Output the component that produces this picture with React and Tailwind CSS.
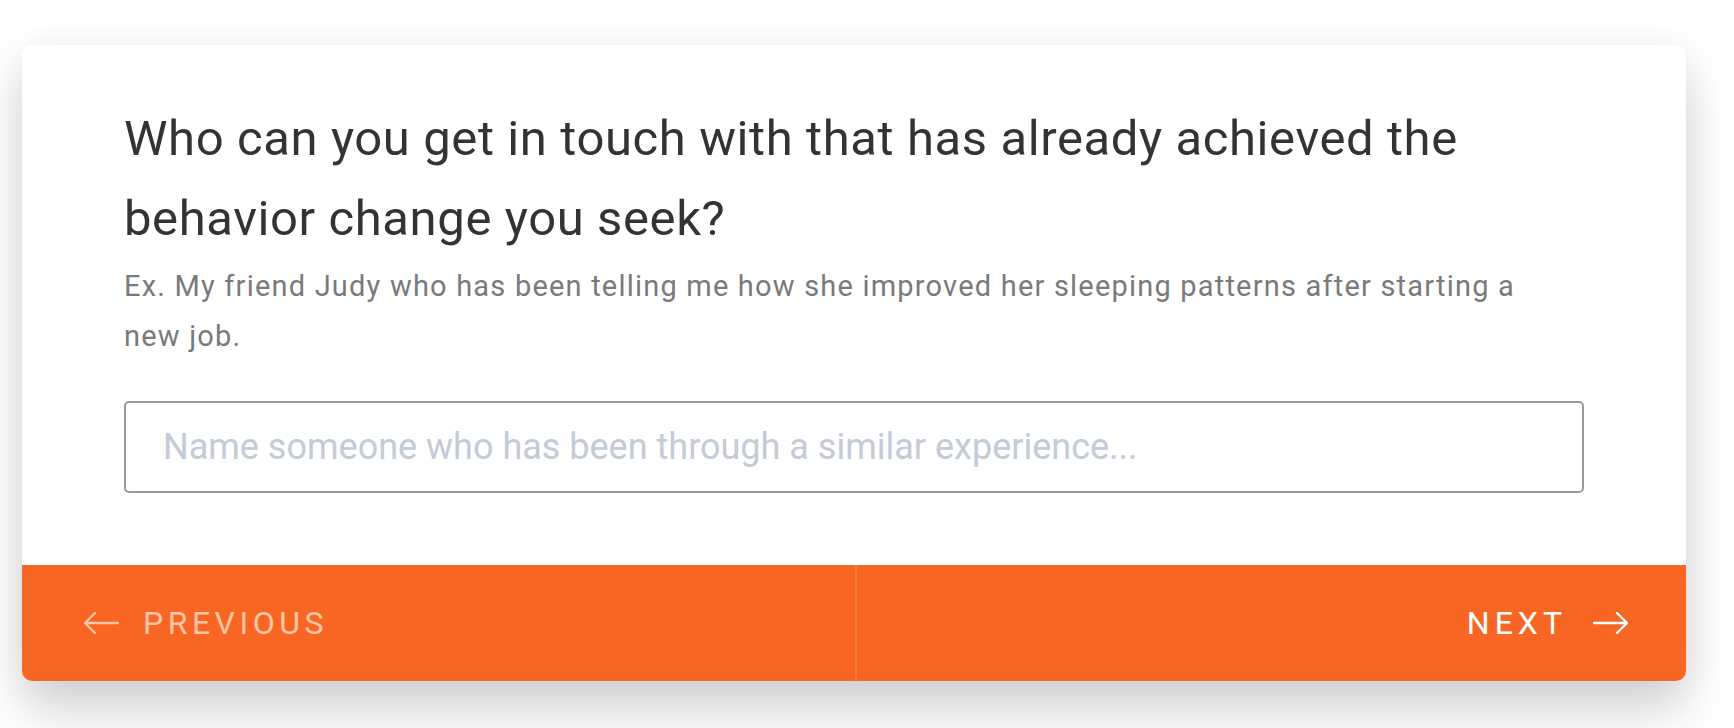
import React from "react";

function Arrow({ dir = "right", className = "" }) {
  const d =
    dir === "right"
      ? "M1 11 H34 M24 1 L34 11 L24 21"
      : "M34 11 H1 M11 1 L1 11 L11 21";
  return (
    <svg width="35" height="22" viewBox="0 0 35 22" fill="none" className={className}>
      <path d={d} stroke="currentColor" strokeWidth="2.4" strokeLinecap="round" strokeLinejoin="round" />
    </svg>
  );
}

export default function App() {
  return (
    <div className="min-h-screen bg-white pt-[45px] pl-[22px] font-['Roboto',sans-serif]">
      <div className="w-[1664px] rounded-[10px] bg-white shadow-[0_30px_50px_rgba(0,0,0,0.17),0_0_40px_rgba(0,0,0,0.05)] overflow-hidden">
        <div className="px-[102px] pt-[54px] pb-[72px]">
          <h2 className="text-[49px] leading-[80px] tracking-[0.6px] text-[#333333] font-normal">
            Who can you get in touch with that has already achieved the behavior change you seek?
          </h2>
          <p className="mt-[2px] max-w-[1430px] text-[29px] leading-[50px] tracking-[1.2px] text-[#7a7a7a]">
            Ex. My friend Judy who has been telling me how she improved her sleeping patterns after starting a new job.
          </p>
          <input
            type="text"
            placeholder="Name someone who has been through a similar experience..."
            className="mt-[40px] block w-full h-[92px] rounded-[5px] border-2 border-[#999999] px-[37px] text-[36px] text-[#333] placeholder:text-[#c3cbd6] outline-none"
          />
        </div>
        <div className="flex h-[116px] bg-[#f86624]">
          <button className="flex-1 flex items-center pl-[62px] text-[#fdc6a6]">
            <Arrow dir="left" />
            <span className="ml-[24px] text-[32px] tracking-[4.5px] uppercase">Previous</span>
          </button>
          <div className="w-[2px] bg-[#fb7a3e]" />
          <button className="flex-1 flex items-center justify-end pr-[58px] text-white">
            <span className="text-[32px] tracking-[5px] uppercase">Next</span>
            <Arrow dir="right" className="ml-[26px]" />
          </button>
        </div>
      </div>
    </div>
  );
}
